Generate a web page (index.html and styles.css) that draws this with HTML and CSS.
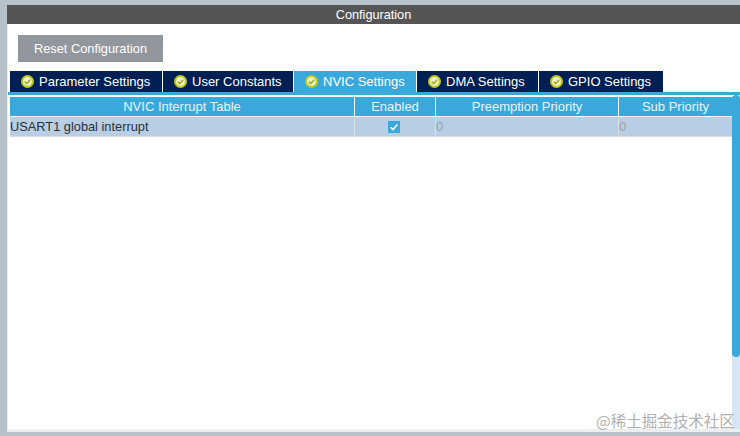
FILE: index.html
```html
<!DOCTYPE html>
<html lang="en">
<head>
<meta charset="utf-8">
<title>Configuration</title>
<link rel="stylesheet" href="styles.css">
</head>
<body>
<main class="panel">
  <header class="title">Configuration</header>
  <div class="toolbar"><button class="reset">Reset Configuration</button></div>
  <nav class="tabs">
    <div class="tab t1"><svg class="ok" viewBox="0 0 13 13"><circle cx="6.5" cy="6.5" r="5.5" fill="#eef2c0" stroke="#bdc81a" stroke-width="2"/><path d="M3.8 6.6l2 2 3.4-3.8" fill="none" stroke="#a3ad22" stroke-width="1.5"/></svg><span>Parameter Settings</span></div>
    <div class="tab t2"><svg class="ok" viewBox="0 0 13 13"><circle cx="6.5" cy="6.5" r="5.5" fill="#eef2c0" stroke="#bdc81a" stroke-width="2"/><path d="M3.8 6.6l2 2 3.4-3.8" fill="none" stroke="#a3ad22" stroke-width="1.5"/></svg><span>User Constants</span></div>
    <div class="tab t3 active"><svg class="ok" viewBox="0 0 13 13"><circle cx="6.5" cy="6.5" r="5.5" fill="#eef2c0" stroke="#bdc81a" stroke-width="2"/><path d="M3.8 6.6l2 2 3.4-3.8" fill="none" stroke="#a3ad22" stroke-width="1.5"/></svg><span>NVIC Settings</span></div>
    <div class="tab t4"><svg class="ok" viewBox="0 0 13 13"><circle cx="6.5" cy="6.5" r="5.5" fill="#eef2c0" stroke="#bdc81a" stroke-width="2"/><path d="M3.8 6.6l2 2 3.4-3.8" fill="none" stroke="#a3ad22" stroke-width="1.5"/></svg><span>DMA Settings</span></div>
    <div class="tab t5"><svg class="ok" viewBox="0 0 13 13"><circle cx="6.5" cy="6.5" r="5.5" fill="#eef2c0" stroke="#bdc81a" stroke-width="2"/><path d="M3.8 6.6l2 2 3.4-3.8" fill="none" stroke="#a3ad22" stroke-width="1.5"/></svg><span>GPIO Settings</span></div>
  </nav>
  <section class="content">
    <div class="table">
      <div class="row head">
        <div class="cell">NVIC Interrupt Table</div>
        <div class="cell">Enabled</div>
        <div class="cell">Preemption Priority</div>
        <div class="cell">Sub Priority</div>
      </div>
      <div class="row body">
        <div class="cell name">USART1 global interrupt</div>
        <div class="cell check"><svg class="box" viewBox="0 0 12 12"><rect width="12" height="12" fill="#39a9dc"/><path d="M2.6 6.2l2.4 2.4 4.4-5" fill="none" stroke="#fff" stroke-width="1.5"/></svg></div>
        <div class="cell num">0</div>
        <div class="cell num">0</div>
      </div>
    </div>
    <div class="scroll"><div class="thumb"></div></div>
  </section>
</main>
<div class="mark">@稀土掘金技术社区</div>
</body>
</html>
```

FILE: styles.css
```css
* { box-sizing: border-box; }
html, body { margin: 0; height: 100%; }
body {
  width: 740px; height: 436px; overflow: hidden; position: relative;
  background: #b5c2c9; padding: 5px 0 4px 7px;
  font-family: "Liberation Sans", Arial, sans-serif;
}
.panel { height: 427px; background: #fff; display: flex; flex-direction: column; border-left: 1px solid #eceeef; border-bottom: 3px solid #eceeef; }
.title {
  height: 19px; margin-left: -1px; background: #545554; color: #fff; font-size: 12.7px; line-height: 20px; text-align: center;
}
.toolbar { padding: 11px 0 0 10px; height: 47px; }
.reset {
  display: block; width: 145px; height: 27px; border: 0; padding: 0; background: #91979d; color: #fff;
  font: 12.8px "Liberation Sans", Arial, sans-serif;
}
.tabs { display: flex; gap: 1px; padding-left: 2px; height: 21px; }
.tab {
  background: #002053; color: #fff; font-size: 13px; display: flex; align-items: center;
  padding-left: 11px; gap: 5px; height: 21px;
}
.tab.active { background: #39a9dc; }
.t1 { width: 152px; } .t2 { width: 130px; } .t3 { width: 122px; } .t4 { width: 121px; } .t5 { width: 124px; }
.ok { width: 13px; height: 13px; flex: none; }
.content {
  flex: 1; display: flex; border-top: 3px solid #39a9dc; padding-left: 2px; min-height: 0;
}
.table { width: 722px; flex: none; padding-top: 2px; }
.row { display: grid; gap: 1px; grid-template-columns: 344px 80px 182px 113px; }
.cell { height: 19px; font-size: 13px; line-height: 20px; }
.head .cell { background: #39a9dc; color: #e8f4fa; text-align: center; }
.body { margin-top: 1px; background: #d8dde0; height: 20px; }
.body .cell { background: #b7cee4; height: 19px; color: #2c3038; font-size: 12.8px; }
.body .num { color: #9aa3ab; }
.check { display: flex; align-items: center; justify-content: center; padding-right: 2px; }
.box { width: 12px; height: 12px; }
.scroll { flex: none; width: 8px; background: #d6e6f5; border-radius: 4px 0 0 0; }
.thumb { height: 262px; background: #39a9dc; border-radius: 4px; }
.mark {
  position: absolute; left: 596px; top: 409px; color: #b0b0b0; font: 15.5px "Noto Sans CJK SC", sans-serif; white-space: nowrap;
}
```
